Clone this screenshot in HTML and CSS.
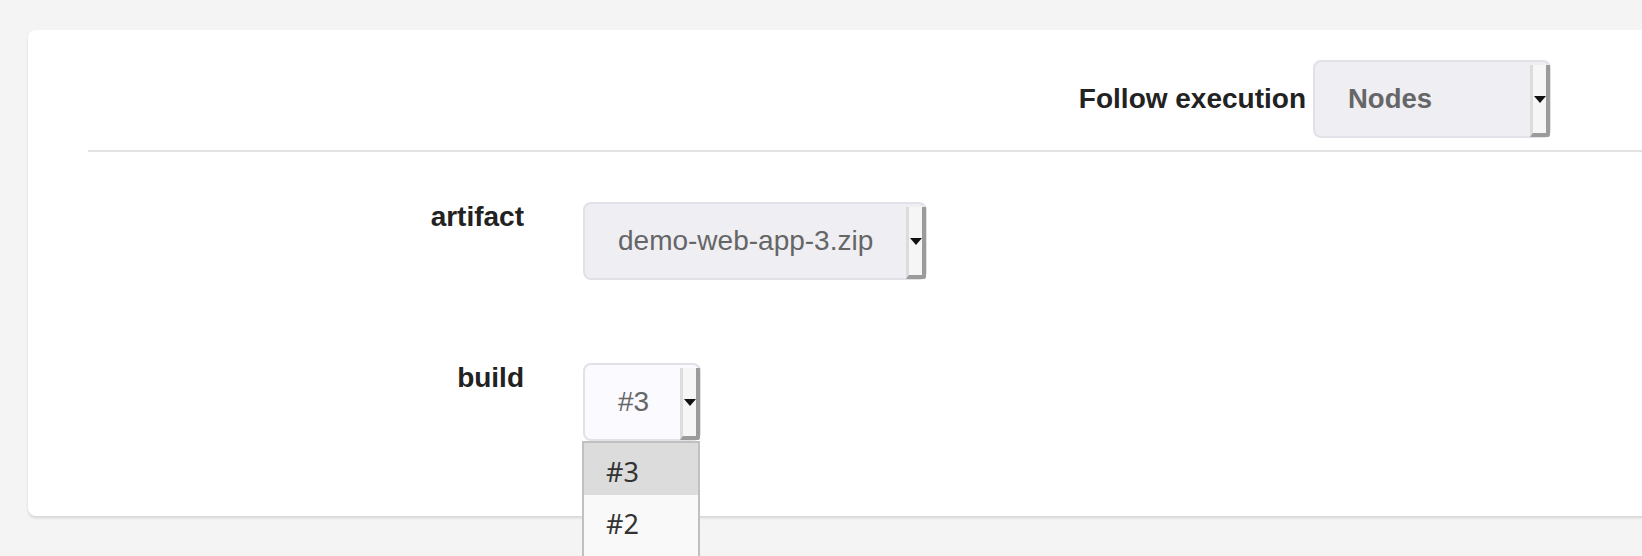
FILE: index.html
```html
<!DOCTYPE html>
<html lang="en">
<head>
<meta charset="utf-8">
<title>Follow execution</title>
<link rel="stylesheet" href="styles.css">
</head>
<body>
<div class="card">
  <div class="header">
    <span class="head-label">Follow execution</span>
    <div class="select select-nodes">
      <span class="select-value value-bold">Nodes</span>
      <span class="select-btn"><span class="arrow"></span></span>
    </div>
  </div>
  <div class="divider"></div>
  <div class="form">
    <div class="row">
      <div class="label">artifact</div>
      <div class="select select-artifact">
        <span class="select-value">demo-web-app-3.zip</span>
        <span class="select-btn"><span class="arrow"></span></span>
      </div>
    </div>
    <div class="row">
      <div class="label">build</div>
      <div class="select-wrap">
        <div class="select select-build">
          <span class="select-value">#3</span>
          <span class="select-btn"><span class="arrow"></span></span>
        </div>
        <ul class="dropdown">
          <li class="option option-active">#3</li>
          <li class="option">#2</li>
        </ul>
      </div>
    </div>
  </div>
</div>
</body>
</html>
```

FILE: styles.css
```css
html, body {
  margin: 0;
  padding: 0;
  overflow: hidden;
}

body {
  background: #f4f4f4;
  font-family: "Liberation Sans", Arial, sans-serif;
  color: #222;
  height: 556px;
}

.card {
  margin: 30px 0 0 28px;
  width: 1700px;
  height: 486px;
  box-sizing: border-box;
  background: #fff;
  border-radius: 8px;
  box-shadow: 0 2px 3px rgba(0, 0, 0, 0.13);
}

.header {
  display: flex;
  justify-content: flex-end;
  align-items: center;
  gap: 7px;
  padding: 30px 177px 12px 0;
}

.head-label,
.label {
  font-size: 28px;
  font-weight: bold;
  color: #222;
  line-height: 30px;
}

.divider {
  margin-left: 60px;
  height: 2px;
  background: #e3e3e3;
}

.form {
  display: flex;
  flex-direction: column;
  gap: 83px;
  padding-top: 50px;
}

.row {
  display: flex;
  align-items: flex-start;
  gap: 59px;
}

.label {
  width: 496px;
  text-align: right;
}

.select {
  display: flex;
  align-items: stretch;
  box-sizing: border-box;
  height: 78px;
  border: 2px solid #e1e1e7;
  border-radius: 8px;
  background: #eeeef3;
  color: #666;
  font-size: 28px;
}

.select-nodes { width: 238px; }
.select-artifact { width: 344px; }
.select-build { width: 118px; background: #fafaff; }

.select-value {
  flex: 1;
  display: flex;
  align-items: center;
  padding-left: 33px;
  white-space: nowrap;
}

.value-bold {
  font-weight: bold;
  font-size: 27.5px;
}

.select-btn {
  display: flex;
  align-items: center;
  justify-content: center;
  width: 13px;
  margin: 3px -1px -1px 0;
  background: #f6f6f6;
  border-left: 3px solid #dcdcdc;
  border-right: 4px solid #9b9b9b;
  border-bottom: 4px solid #9b9b9b;
  border-bottom-right-radius: 3px;
}

.arrow {
  width: 0;
  height: 0;
  margin-top: 1px;
  border-left: 6px solid transparent;
  border-right: 6px solid transparent;
  border-top: 7px solid #111;
}

.select-wrap {
  position: relative;
}

.dropdown {
  position: absolute;
  top: 100%;
  left: -1px;
  width: 118px;
  height: 140px;
  box-sizing: border-box;
  margin: 0;
  padding: 0;
  list-style: none;
  border: 2px solid #c0c0c0;
  border-bottom: 0;
  background: #f9f9f9;
  font-family: "Noto Sans", "Open Sans", sans-serif;
  font-size: 27px;
  color: #333;
}

.option {
  height: 52px;
  box-sizing: border-box;
  padding: 6px 0 0 22px;
  line-height: 46px;
}

.option-active {
  background: #dcdcdc;
}
```
